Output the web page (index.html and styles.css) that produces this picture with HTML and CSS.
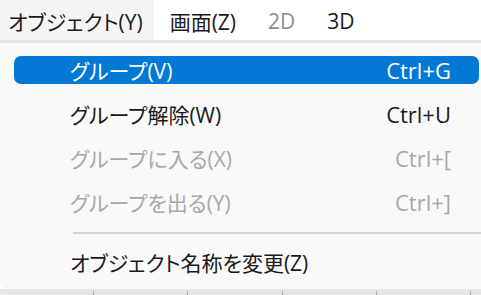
FILE: index.html
```html
<!DOCTYPE html>
<html lang="ja">
<head>
    <meta charset="UTF-8">
    <title>メニュー</title>
    <link rel="stylesheet" href="styles.css">
</head>
<body>
    <nav class="menubar">
        <div class="menubar-item ativo">オブジェクト(Y)</div>
        <div class="menubar-item">画面(Z)</div>
        <div class="menubar-item desativado">2D</div>
        <div class="menubar-item">3D</div>
    </nav>
    <div class="menu">
        <div class="menu-item selecionado">
            <span class="rotulo">グループ(V)</span>
            <span class="atalho">Ctrl+G</span>
        </div>
        <div class="menu-item">
            <span class="rotulo">グループ解除(W)</span>
            <span class="atalho">Ctrl+U</span>
        </div>
        <div class="menu-item desativado">
            <span class="rotulo">グループに入る(X)</span>
            <span class="atalho">Ctrl+[</span>
        </div>
        <div class="menu-item desativado">
            <span class="rotulo">グループを出る(Y)</span>
            <span class="atalho">Ctrl+]</span>
        </div>
        <div class="separador"></div>
        <div class="menu-item">
            <span class="rotulo">オブジェクト名称を変更(Z)</span>
        </div>
    </div>
    <div class="fundo">
        <div class="reguas"></div>
    </div>
</body>
</html>
```

FILE: styles.css
```css
body {
    margin: 0;
    width: 481px;
    height: 295px;
    overflow: hidden;
    background-color: #fff;
    font-family: "Open Sans", "Noto Sans CJK JP", sans-serif;
    font-feature-settings: "palt";
    font-size: 21px;
    color: #1a1a1a;
}

.menubar {
    display: flex;
    height: 40px;
    align-items: stretch;
}

.menubar-item {
    display: flex;
    align-items: center;
    padding: 2px 16px 0 16px;
}

.menubar-item.ativo {
    background-color: #f5f5f5;
    padding-left: 8px;
    padding-right: 11px;
}

.menubar-item.desativado {
    color: #8c8c8c;
}

.menu {
    background-color: #f9f9f9;
    border-top: 3px solid #e6e6e6;
    border-bottom-left-radius: 8px;
    height: 220px;
    padding: 13px 2px 13px 14px;
    display: flex;
    flex-direction: column;
    gap: 16px;
}

.menu-item {
    display: flex;
    align-items: center;
    justify-content: space-between;
    height: 28px;
    padding: 0 28px 0 56px;
    border-radius: 7px;
}

.menu-item.selecionado {
    background-color: #0078d4;
    color: #fff;
}

.menu-item.desativado {
    color: #a8a8a8;
}

.atalho {
    font-size: 22px;
}

.separador {
    height: 2px;
    background-color: #d6d6d6;
    margin: 0 -2px -2px 59px;
}

.fundo {
    height: 6px;
    background-color: #e6e6e6;
    padding-top: 2px;
}

.reguas {
    height: 4px;
    background: repeating-linear-gradient(90deg, transparent 0 93px, #9fb3ac 93px 94px, transparent 94px 94.25px);
}
```
